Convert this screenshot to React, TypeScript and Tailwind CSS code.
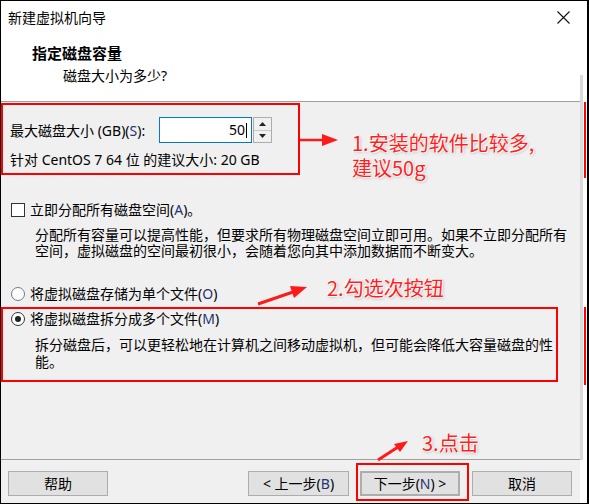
import React from "react";

const font = "font-['Noto_Sans','Noto_Sans_CJK_SC',sans-serif]";
const anno =
  "absolute whitespace-nowrap text-[20px] leading-[25px] text-[#ff1f1f] font-['Noto_Sans_CJK_SC',sans-serif] [text-shadow:0_0_1px_#fff,1px_1px_1px_#fff,-1px_-1px_1px_#fff,1px_1px_3px_rgba(0,0,0,0.35)]";
const hk = "text-[#1f3470]";

function Btn({ children, className = "" }: { children: React.ReactNode; className?: string }) {
  return (
    <div
      className={`w-[100px] h-[25px] flex items-center justify-center bg-[#e1e1e1] border border-[#adadad] text-[14px] leading-none whitespace-nowrap ${className}`}
    >
      {children}
    </div>
  );
}

export default function App() {
  return (
    <div
      className={`relative w-[589px] h-[504px] flex border-t border-b border-l border-black bg-white text-black overflow-hidden ${font}`}
    >
      {/* dialog */}
      <div className="w-[579px] flex flex-col">
        {/* title bar */}
        <div className="h-[33px] flex items-center justify-between pl-[7px] bg-white">
          <span className="text-[14px] leading-none">新建虚拟机向导</span>
          <svg width="13" height="13" viewBox="0 0 13 13" className="mr-[10px]">
            <path d="M0.5 0.5 L12.5 12.5 M12.5 0.5 L0.5 12.5" stroke="#111" strokeWidth="1.1" />
          </svg>
        </div>
        {/* header */}
        <div className="h-[67px] bg-white pt-[9px]">
          <div className="pl-[31px] text-[15px] leading-[20px] font-bold">指定磁盘容量</div>
          <div className="pl-[62px] mt-[3px] text-[14px] leading-[20px]">磁盘大小为多少?</div>
        </div>
        <div className="h-px bg-[#a0a0a0]" />
        {/* body */}
        <div className="flex-1 flex flex-col bg-[#f0f0f0]">
          <div className="mt-px w-[299px] h-[72px] border-2 border-[#ff0000] pl-[7px] pt-[12px]">
            <div className="flex items-center h-[26px]">
              <div className="w-[149px] text-[14px] whitespace-nowrap">
                最大磁盘大小 (GB)(<span className={hk}>S</span>):
              </div>
              <div className="w-[93px] h-[26px] border border-[#0078d7] bg-white flex items-center justify-end pr-[4px]">
                <span className="text-[14px] leading-none">50</span>
                <span className="w-px h-[15px] bg-black ml-px" />
              </div>
              <div className="ml-px w-[19px] h-[26px] border border-[#adadad] bg-[#f0f0f0] flex flex-col">
                <div className="flex-1 flex items-center justify-center border-b border-[#c8c8c8]">
                  <svg width="7" height="4" viewBox="0 0 7 4">
                    <path d="M0 4 L3.5 0 L7 4 Z" fill="#222" />
                  </svg>
                </div>
                <div className="flex-1 flex items-center justify-center">
                  <svg width="7" height="4" viewBox="0 0 7 4">
                    <path d="M0 0 L7 0 L3.5 4 Z" fill="#222" />
                  </svg>
                </div>
              </div>
            </div>
            <div className="mt-[7px] text-[14px] leading-[20px] whitespace-nowrap">
              针对 CentOS 7 64 位 的建议大小: 20 GB
            </div>
          </div>

          <div className="mt-[25px] h-[20px] flex items-center pl-[10px]">
            <div className="w-[14px] h-[14px] border border-[#333] bg-white" />
            <span className="ml-[5px] text-[14px] leading-none whitespace-nowrap">
              立即分配所有磁盘空间(<span className={hk}>A</span>)。
            </span>
          </div>
          <div className="mt-[7px] pl-[34px] text-[14px] leading-[16px] whitespace-nowrap">
            <div>分配所有容量可以提高性能，但要求所有物理磁盘空间立即可用。如果不立即分配所有</div>
            <div>空间，虚拟磁盘的空间最初很小，会随着您向其中添加数据而不断变大。</div>
          </div>

          <div className="mt-[25px] h-[20px] flex items-center pl-[10px]">
            <div className="w-[14px] h-[14px] rounded-full border border-[#6b7a90] bg-white" />
            <span className="ml-[5px] text-[14px] leading-none whitespace-nowrap">
              将虚拟磁盘存储为单个文件(<span className={hk}>O</span>)
            </span>
          </div>

          <div className="mt-[3px] w-[557px] border-2 border-[#ff0000] pt-px pb-[10px]">
            <div className="h-[18px] flex items-center pl-[8px]">
              <div className="w-[14px] h-[14px] rounded-full border border-[#333] bg-white flex items-center justify-center">
                <div className="w-[6px] h-[6px] rounded-full bg-[#222]" />
              </div>
              <span className="ml-[5px] text-[14px] leading-none whitespace-nowrap">
                将虚拟磁盘拆分成多个文件(<span className={hk}>M</span>)
              </span>
            </div>
            <div className="mt-[8px] pl-[32px] text-[14px] leading-[17px] whitespace-nowrap">
              <div>拆分磁盘后，可以更轻松地在计算机之间移动虚拟机，但可能会降低大容量磁盘的性</div>
              <div>能。</div>
            </div>
          </div>
          <div className="flex-1" />
        </div>
        <div className="h-px bg-[#a0a0a0]" />
        {/* footer */}
        <div className="h-[43px] bg-[#f0f0f0] flex items-start pl-[7px]">
          <Btn className="mt-[11px]">帮助</Btn>
          <Btn className="mt-[11px] ml-[140px] w-[101px]">
            &lt; 上一步(<span className={hk}>B</span>)
          </Btn>
          <div className="ml-[7px] mt-[3px] w-[113px] h-[38px] border-2 border-[#ff0000] pl-[2px] pt-[6px]">
            <Btn className="border-2 border-[#0078d7]">
              下一步(<span className={hk}>N</span>) &gt;
            </Btn>
          </div>
          <Btn className="mt-[11px] ml-[3px]">取消</Btn>
        </div>
      </div>

      {/* right edge strips */}
      <div className="w-[3px] flex flex-col">
        <div className="h-[74px]" />
        <div className="h-[385px] bg-[#dadada]" />
        <div className="flex-1" />
      </div>
      <div className="w-px" />
      <div className="w-[2px] flex flex-col">
        <div className="h-[101px]" />
        <div className="h-[76px] bg-[#ff0000]" />
        <div className="h-[129px]" />
        <div className="h-[78px] bg-[#ff0000]" />
        <div className="flex-1" />
      </div>
      <div className="w-px" />
      <div className="w-[2px] bg-black" />

      {/* annotation overlay */}
      <div className="absolute -left-px -top-px w-[589px] h-[504px] pointer-events-none">
        <svg width="589" height="504" className="absolute left-0 top-0">
          <line x1="300" y1="140" x2="325" y2="140" stroke="#ff1a1a" strokeWidth="2.5" />
          <polygon points="322,134 338,140 322,146" fill="#ff1a1a" />
          <line x1="258" y1="304" x2="293" y2="292" stroke="#ff1a1a" strokeWidth="3" />
          <polygon points="294,298 307,287 290,286" fill="#ff1a1a" />
          <line x1="378" y1="460" x2="398" y2="447" stroke="#ff1a1a" strokeWidth="3" />
          <polygon points="400,452 408,441 394,444" fill="#ff1a1a" />
        </svg>
        <div className={`${anno} left-[352px] top-[130px]`}>
          <div>1.安装的软件比较多,</div>
          <div>建议50g</div>
        </div>
        <div className={`${anno} left-[327px] top-[275px]`}>2.勾选次按钮</div>
        <div className={`${anno} left-[422px] top-[430px]`}>3.点击</div>
      </div>
    </div>
  );
}
